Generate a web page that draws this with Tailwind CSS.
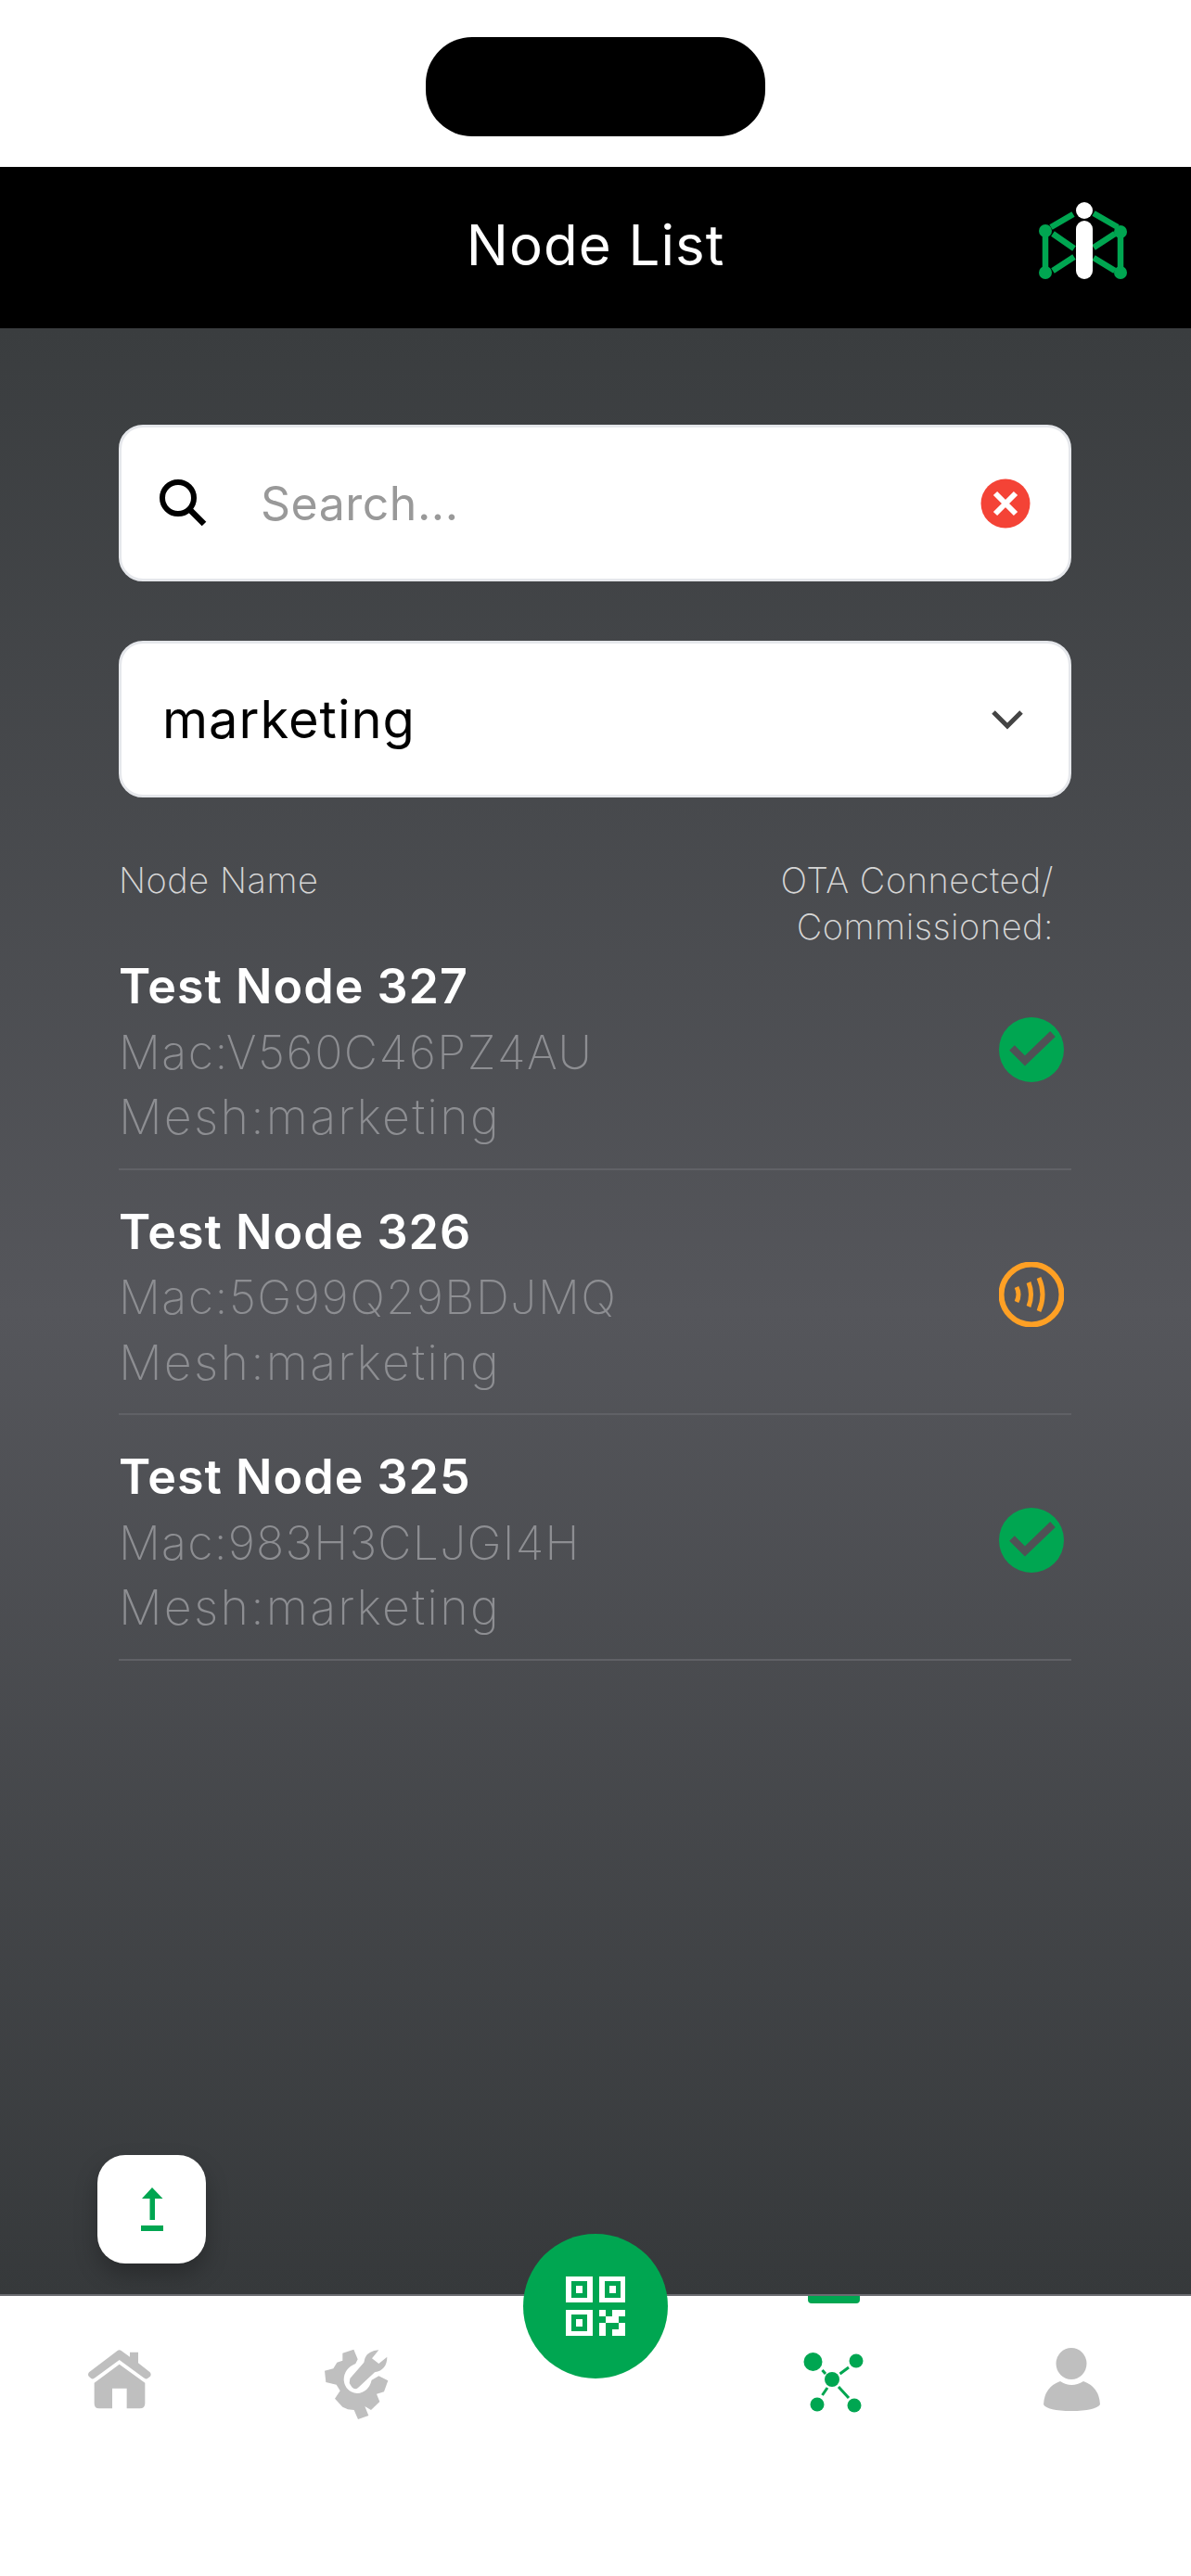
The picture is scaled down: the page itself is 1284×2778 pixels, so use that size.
<!DOCTYPE html>
<html lang="en">
<head>
    <meta charset="UTF-8">
    <meta name="viewport" content="width=device-width, initial-scale=1.0">
    <title>Node List</title>
    <script src="https://cdn.jsdelivr.net/npm/@tailwindcss/browser@4"></script>
</head>
<body class="font-['Inter',sans-serif]">
<div class="relative w-[1284px] h-[2778px] flex flex-col overflow-hidden bg-white">

    <!-- Status area -->
    <div class="h-[180px] flex justify-center pt-[40px] bg-white">
        <div class="w-[366px] h-[107px] rounded-[50px] bg-black"></div>
    </div>

    <!-- Header -->
    <header class="relative h-[174px] flex items-center justify-center pb-[6px] bg-black">
        <h1 class="text-[60px] leading-none tracking-[1px] text-white">Node List</h1>
        <svg class="absolute left-[1118px] top-[32px]" width="100" height="100" viewBox="0 0 100 100">
            <g stroke="#00a651" stroke-width="6.5" fill="none">
                <path d="M15 33 L39 19 M61 18 L87 33 M9 40 V80 M90 40 V80 M17 40 L40 56 M84 40 L61 55 M17 80 L40 65 M84 80 L61 66"/>
            </g>
            <circle cx="9" cy="37" r="7" fill="#00a651"/>
            <circle cx="90" cy="38" r="7" fill="#00a651"/>
            <circle cx="9" cy="82" r="7" fill="#00a651"/>
            <circle cx="90" cy="82" r="7" fill="#00a651"/>
            <circle cx="51" cy="15" r="9" fill="#fff"/>
            <rect x="42" y="26" width="18" height="63" rx="9" fill="#fff"/>
        </svg>
    </header>

    <!-- Main -->
    <main class="flex-1 flex flex-col pt-[104px] pl-[128px] pr-[129px] bg-[linear-gradient(180deg,#3a3d3f_0%,#55565b_50%,#36393b_100%)]">
        <!-- Search -->
        <div class="h-[169px] flex items-center pl-[39px] pr-[41px] rounded-[26px] border-[3px] border-gray-200 bg-white">
            <svg width="56" height="56" viewBox="0 0 56 56" class="shrink-0">
                <circle cx="22" cy="22" r="17" fill="none" stroke="#000" stroke-width="6"/>
                <path d="M34 34 L50 50" stroke="#000" stroke-width="6.5"/>
            </svg>
            <span class="ml-[55px] flex-1 text-[50px] leading-none tracking-[0.5px] text-[#999]">Search...</span>
            <svg width="54" height="54" viewBox="0 0 54 54" class="shrink-0">
                <circle cx="27" cy="27" r="26.5" fill="#f44336"/>
                <path d="M16 16 L38 38 M38 16 L16 38" stroke="#fff" stroke-width="6"/>
            </svg>
        </div>

        <!-- Mesh select -->
        <div class="mt-[64px] h-[169px] flex items-center justify-between pl-[44px] pr-[48px] rounded-[26px] border-[3px] border-gray-200 bg-white">
            <span class="text-[56px] leading-none tracking-[1px] text-black">marketing</span>
            <svg width="36" height="24" viewBox="0 0 36 24">
                <path d="M3 4 L18 19 L33 4" fill="none" stroke="#444" stroke-width="5"/>
            </svg>
        </div>

        <!-- Column labels -->
        <div class="mt-[64px] flex justify-between pr-[19px] text-[38px] leading-[50px] font-extralight tracking-[0.5px] text-[#d6d6d6]">
            <span>Node Name</span>
            <span class="text-right">OTA Connected/<br>Commissioned:</span>
        </div>

        <!-- Nodes -->
        <div class="mt-[2px] flex flex-col gap-[29px]">
            <div class="flex items-center justify-between pb-[19px] pr-[8px] border-b-2 border-[#606166]">
                <div class="flex flex-col pt-[3px] leading-[70.5px]">
                    <span class="text-[52px] font-semibold tracking-[1px] text-white">Test Node 327</span>
                    <span class="text-[50px] font-extralight tracking-[1.5px] text-[#8d8e92]">Mac:V560C46PZ4AU</span>
                    <span class="text-[52px] font-extralight tracking-[2.2px] text-[#8d8e92]">Mesh:marketing</span>
                </div>
                <svg width="70" height="70" viewBox="0 0 70 70" class="mb-[3px]">
                    <circle cx="35" cy="35" r="35" fill="#00a651"/>
                    <path d="M14 33 L28 47 L58 18" fill="none" stroke="#505155" stroke-width="8"/>
                </svg>
            </div>
            <div class="flex items-center justify-between pb-[19px] pr-[8px] border-b-2 border-[#606166]">
                <div class="flex flex-col pt-[3px] leading-[70.5px]">
                    <span class="text-[52px] font-semibold tracking-[1px] text-white">Test Node 326</span>
                    <span class="text-[50px] font-extralight tracking-[1.5px] text-[#8d8e92]">Mac:5G99Q29BDJMQ</span>
                    <span class="text-[52px] font-extralight tracking-[2.2px] text-[#8d8e92]">Mesh:marketing</span>
                </div>
                <svg width="70" height="70" viewBox="0 0 70 70" class="mb-[3px]">
                    <circle cx="35" cy="35" r="32.5" fill="none" stroke="#ffa024" stroke-width="6"/>
                    <path d="M19 27 Q23 35 19 43 M32 22 Q37 35 32 48 M43 17 Q51 35 43 53" fill="none" stroke="#ffa024" stroke-width="5"/>
                </svg>
            </div>
            <div class="flex items-center justify-between pb-[19px] pr-[8px] border-b-2 border-[#606166]">
                <div class="flex flex-col pt-[3px] leading-[70.5px]">
                    <span class="text-[52px] font-semibold tracking-[1px] text-white">Test Node 325</span>
                    <span class="text-[50px] font-extralight tracking-[1.2px] text-[#8d8e92]">Mac:983H3CLJGI4H</span>
                    <span class="text-[52px] font-extralight tracking-[2.2px] text-[#8d8e92]">Mesh:marketing</span>
                </div>
                <svg width="70" height="70" viewBox="0 0 70 70" class="mb-[3px]">
                    <circle cx="35" cy="35" r="35" fill="#00a651"/>
                    <path d="M14 33 L28 47 L58 18" fill="none" stroke="#505155" stroke-width="8"/>
                </svg>
            </div>
        </div>
    </main>

    <!-- Bottom tabs -->
    <nav class="relative h-[304px] grid grid-cols-5 border-t-2 border-[#6a6b70] bg-white">
        <div class="flex justify-center pt-[49px] pl-[3px]">
            <svg class="w-[90px] h-[85px]" viewBox="0 0 270 255">
                <path d="M33 100 L125 30 Q131 26 137 30 L165 50 V35 H192 V70 L230 100 Q236 108 230 114 L222 120 Q216 123 210 118 L131 60 L52 118 Q46 123 40 120 L33 114 Q27 107 33 100 Z" fill="#bfbfbf"/>
                <path d="M131 74 L214 134 V200 Q214 217 197 217 H155 V152 H108 V217 H65 Q50 217 50 200 V134 Z" fill="#bfbfbf"/>
            </svg>
        </div>
        <div class="flex justify-center pt-[49px]">
            <svg class="w-[90px] h-[85px]" viewBox="0 0 270 255">
                <path d="M88 38 L124 26 L137 58 L130 72 Q92 88 92 125 Q96 162 135 168 Q172 165 182 125 L205 112 L235 127 L222 163 L198 170 L208 195 L180 222 L160 210 L172 240 L138 252 L125 222 L105 220 L88 212 L63 185 L80 160 L68 140 L34 132 L30 95 L58 88 L70 68 L88 62 Z" fill="#bfbfbf"/>
                <path d="M112 120 L157 68 Q160 32 205 28 L183 55 L205 72 L232 50 Q232 92 192 100 L138 150 Q128 158 118 148 L110 135 Z" fill="#bfbfbf"/>
            </svg>
        </div>
        <div></div>
        <div class="relative flex justify-center pt-[60px]">
            <span class="absolute top-0 left-[101px] w-[56px] h-[8px] rounded-b-[4px] bg-[#00a651]"></span>
            <svg width="65" height="66" viewBox="0 0 65 66">
                <circle cx="10.5" cy="11" r="10" fill="#00a651"/>
                <circle cx="57" cy="10" r="7.5" fill="#00a651"/>
                <circle cx="31" cy="30" r="8" fill="#00a651"/>
                <circle cx="15" cy="57" r="7.5" fill="#00a651"/>
                <circle cx="55" cy="58" r="7.5" fill="#00a651"/>
                <path d="M20.5 20 L24 24 M39.5 24 L49 17 M26 39 L20.5 47 M38 38 L49 50" stroke="#00a651" stroke-width="3"/>
            </svg>
        </div>
        <div class="flex justify-center pt-[56px]">
            <svg width="61" height="68" viewBox="0 0 61 68">
                <ellipse cx="30" cy="17" rx="16.5" ry="17" fill="#bfbfbf"/>
                <path d="M18 36 Q30 44 43 36 Q60 42 61 61 Q56 68 30 68 Q4 68 0 61 Q1 42 18 36 Z" fill="#bfbfbf"/>
            </svg>
        </div>
    </nav>

    <!-- Floating upload button -->
    <button class="absolute left-[105px] top-[2324px] w-[117px] h-[117px] flex items-center justify-center rounded-[30px] bg-white shadow-[0_12px_24px_rgba(0,0,0,0.25)]">
        <svg width="24" height="47" viewBox="0 0 24 47">
            <path d="M12 0 L23.5 12 H15 V35 H9.5 V12 H1 Z" fill="#00a651"/>
            <rect x="0" y="41" width="24" height="6" fill="#00a651"/>
        </svg>
    </button>

    <!-- QR button -->
    <button class="absolute left-[564px] top-[2409px] w-[156px] h-[156px] flex items-center justify-center rounded-full bg-[#00a651]">
        <svg width="64" height="64" viewBox="0 0 64 64">
            <rect x="0" y="0" width="29" height="28" fill="#fff"/>
            <rect x="36" y="0" width="28" height="28" fill="#fff"/>
            <rect x="0" y="36" width="29" height="28" fill="#fff"/>
            <path d="M6 5 H23 V23 H6 Z M42 5 H59 V23 H42 Z M6 41 H23 V59 H6 Z" fill="#00a651"/>
            <path d="M11 10 H18 V18 H11 Z M47 10 H54 V18 H47 Z M11 46 H18 V54 H11 Z" fill="#fff"/>
            <path d="M36 36 H43 V43 H36 Z M50 36 H64 V43 H57 V50 H50 Z M43 43 H50 V50 H43 Z M36 50 H43 V64 H36 Z M50 57 H57 V50 H64 V64 H50 Z" fill="#fff"/>
        </svg>
    </button>
</div>
</body>
</html>
